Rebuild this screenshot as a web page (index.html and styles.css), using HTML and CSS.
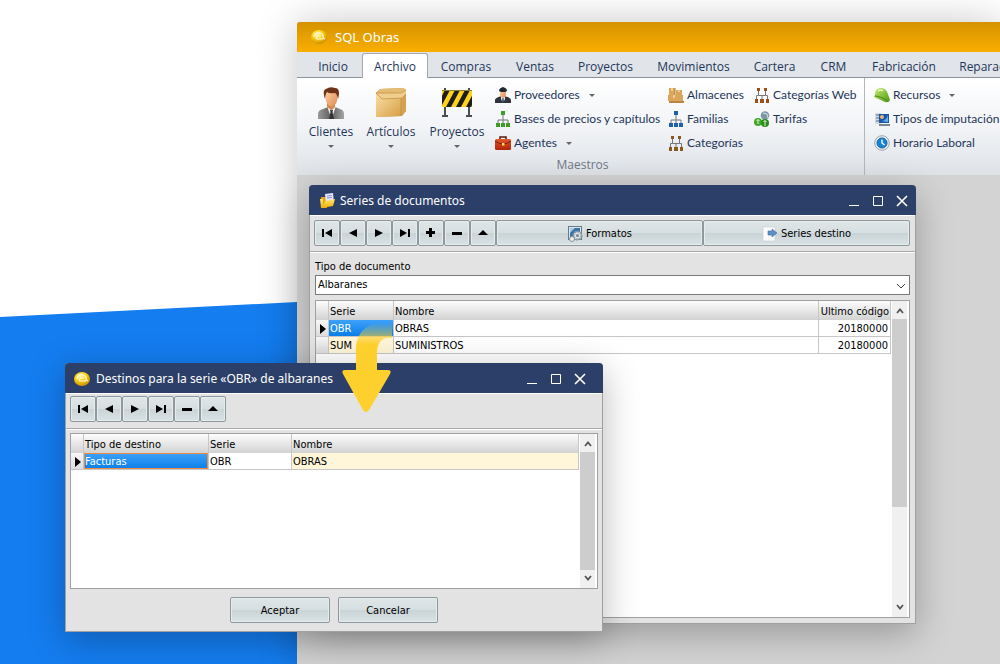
FILE: index.html
```html
<!DOCTYPE html>
<html lang="es">
<head>
<meta charset="utf-8">
<title>SQL Obras</title>
<link rel="stylesheet" href="styles.css">
</head>
<body>
<svg class="defs" aria-hidden="true">
  <defs>
    <radialGradient id="gold" cx=".4" cy=".3" r=".75"><stop offset="0" stop-color="#fff3a0"/><stop offset=".45" stop-color="#fcd116"/><stop offset="1" stop-color="#c98500"/></radialGradient>
    <linearGradient id="suit" x1="0" y1="0" x2="1" y2="0"><stop offset="0" stop-color="#9a9a9a"/><stop offset=".5" stop-color="#5e5e5e"/><stop offset="1" stop-color="#a5a5a5"/></linearGradient>
    <linearGradient id="face" x1="0" y1="0" x2="1" y2="1"><stop offset="0" stop-color="#ffd2a6"/><stop offset="1" stop-color="#e08a50"/></linearGradient>
    <linearGradient id="carton" x1="0" y1="0" x2="1" y2="1"><stop offset="0" stop-color="#f9dfa6"/><stop offset="1" stop-color="#d79f45"/></linearGradient>
    <linearGradient id="red" x1="0" y1="0" x2="0" y2="1"><stop offset="0" stop-color="#e4572c"/><stop offset="1" stop-color="#b02408"/></linearGradient>
    <linearGradient id="lime" x1="0" y1="0" x2="1" y2="1"><stop offset="0" stop-color="#c6ec6c"/><stop offset="1" stop-color="#4c9a14"/></linearGradient>
    <linearGradient id="folder" x1="0" y1="0" x2="0" y2="1"><stop offset="0" stop-color="#ffe676"/><stop offset="1" stop-color="#f0b000"/></linearGradient>
    <linearGradient id="fade" x1="0" y1="0" x2="0" y2="1"><stop offset=".03" stop-color="#fed02e" stop-opacity="0"/><stop offset=".27" stop-color="#fed02e"/><stop offset="1" stop-color="#fed02e"/></linearGradient>
    <clipPath id="boardclip"><rect x="1" y="3" width="30" height="17"/></clipPath>
  </defs>
  <symbol id="logo" viewBox="0 0 16 16"><ellipse cx="8" cy="8" rx="8" ry="7" fill="url(#gold)"/><path d="M3 8q1-5 6-4 4 1 3 5l2 1M10 7H7Q4 8 6 10h6" fill="none" stroke="#fffbe0" stroke-width="1.200"/></symbol>
  <symbol id="client" viewBox="0 0 32 32"><path d="M3 32v-5q0-4 5-5l5-2h7l5 2q4 1 4 5v5z" fill="url(#suit)"/><path d="M12 19l4.500 13L21 19z" fill="#f6f6f6"/><path d="M15 23h3l-.5 2 1.500 7h-5l1.500-7z" fill="#333"/><path d="M12 16v4l4.500 3.500L20 20v-4z" fill="#d88950"/><ellipse cx="16.500" cy="11" rx="6" ry="8" fill="url(#face)"/><path d="M10 12Q7 3 11 2q4-3 9-1 6 0 3 11-1-5-3-6-6 1-8-1-2 3-2 7z" fill="#6d3316"/></symbol>
  <symbol id="box" viewBox="0 0 32 32"><path d="M1 6l4-4 23-1 3 2v21l-4 5-26 1z" fill="#c69444"/><path d="M1 6h25v23l-25 1z" fill="url(#carton)"/><path d="M26 6l5-3v21l-5 5z" fill="#d5a350"/><path d="M1 6l4-4 23-1 3 2-5 3z" fill="#e5bd72"/><path d="M1 6h25l5-3v4l-4 4-20 1z" fill="#f0cf8e"/><path d="M1 6l6 6 20-1 4-4M1 6h25l5-3M26 12v17" fill="none" stroke="#bd8b3d" stroke-width=".7"/></symbol>
  <symbol id="barrier" viewBox="0 0 32 32"><path d="M3 1h2v28H3zM27 1h2v28h-2zM1 28h6v2H1zM25 28h6v2h-6z" fill="#4b4f52"/><rect x="1" y="3" width="30" height="17" fill="#ffd21c"/><g clip-path="url(#boardclip)"><path d="M-5 20L4 3h5L0 20zM5 20L14 3h5L10 20zM15 20L24 3h5L20 20zM25 20L34 3h5L30 20z" fill="#1d1d1d"/></g><path d="M1 3.500h30" stroke="#8c7d3a"/></symbol>
  <symbol id="supplier" viewBox="0 0 16 16"><path d="M0 16v-3q0-2 5-3.500h6q5 1.500 5 3.500v3z" fill="#30343a"/><path d="M6 9h4v3l-2 4-2-4z" fill="#eee"/><ellipse cx="8" cy="6.500" rx="3" ry="4.300" fill="url(#face)"/><path d="M4 4q0-3 4-4 4 1 4 4l-2 1H6z" fill="#22272e"/><path d="M7.500 11h1l.5 5H7z" fill="#2b3d60"/></symbol>
  <symbol id="tree" viewBox="0 0 16 16"><path d="M8 3v10M3 13V9h10v4" fill="none" stroke="#777" stroke-width="1"/><path d="M6 0h4v4H6zM1 12h4v4H1zM6 12h4v4H6zM11 12h4v4h-4z" fill="currentColor"/></symbol>
  <symbol id="tree2" viewBox="0 0 16 16"><path d="M4.500 3v5.500h-2V13M11.500 3v5.500h2V13M4.500 8.500h7M8 8.500V13" fill="none" stroke="#777"/><path d="M3 1h3v3H3zM10 1h3v3h-3zM1 12h3v4H1zM6 12h4v4H6zM12 12h3v4h-3z" fill="currentColor"/></symbol>
  <symbol id="case" viewBox="0 0 16 16"><path d="M5 4V2h6v2" fill="none" stroke="#5c1705" stroke-width="1.500"/><rect y="4" width="16" height="11" rx="1.500" fill="url(#red)"/><path d="M0 6q8 6 16 0" fill="none" stroke="#7e1a06"/><path d="M7 8h2.500v2.500H7z" fill="#ffe048"/></symbol>
  <symbol id="store" viewBox="0 0 16 16"><path d="M1 1h6v7H1zM8 3h6v6H8zM0 8h15v6H0z" fill="#dba65c"/><path d="M3 1h2v3H3zM10 3h2v2h-2zM5 8h2v3H5z" fill="#f2cf90"/><path d="M1 14h15v2H1z" fill="#b98545"/><path d="M7 1v7" stroke="#b57e38"/></symbol>
  <symbol id="rates" viewBox="0 0 16 16"><circle cx="11" cy="4.500" r="4.300" fill="#7f97a5"/><path d="M9 2l4 1 1 4" stroke="#d1e2e8" fill="none"/><circle cx="4" cy="11" r="4" fill="#43a52a"/><circle cx="11" cy="12" r="4" fill="#2c8a1f"/><path d="M4 8.500V13M2.500 10L4 8.500 5.500 10M11 9.500V15M9.500 11L11 9.500l1.500 1.500" stroke="#dbf7c9" fill="none"/></symbol>
  <symbol id="helmet" viewBox="0 0 16 16"><path d="M1 8Q1 1 7 1q5 0 7 6l2 6q-1 3-5 2L0 10q0-1 1-2z" fill="url(#lime)"/><path d="M1 9q5 0 13 5" fill="none" stroke="#4a8a16"/><path d="M4 4q3-2 5 0" stroke="#effbc6" stroke-width="1.500" fill="none"/></symbol>
  <symbol id="charge" viewBox="0 0 16 16"><path d="M1 2h6v11H1z" fill="#d4dbe0"/><path d="M2 4h3M2 7h3M2 10h3" stroke="#58697a"/><path d="M5 3h10v9H5z" fill="#1b55a8"/><path d="M7 10q5 0 7-6v7z" fill="#60aef4"/><circle cx="8" cy="6" r="2" fill="#e9b27e"/><path d="M5 13h11v2H5z" fill="#7b858e"/></symbol>
  <symbol id="clock" viewBox="0 0 16 16"><circle cx="8" cy="8" r="7.300" fill="#e8edf0" stroke="#9ba5ad"/><circle cx="8" cy="8" r="5" fill="#1683d8" stroke="#1761a2"/><path d="M8 4.500V8l2.500 2" fill="none" stroke="#fff" stroke-width="1.400"/></symbol>
  <symbol id="docs" viewBox="0 0 16 16"><path d="M1 4h5l1 2v9H1z" fill="#e2a70a"/><path d="M5 1l8-1 1 10-8 1z" fill="#e7e6ff"/><path d="M7 3l5-.5M7 5l5-.5" stroke="#8e8cd6"/><path d="M0 6h3v9H1zM2 15l3-7 10-2-2 7z" fill="url(#folder)"/></symbol>
  <symbol id="formats" viewBox="0 0 16 16"><rect x="1.500" y=".5" width="13" height="13" fill="#dfe7ed" stroke="#66798a"/><path d="M3 2h10v9H3z" fill="#3972a5"/><path d="M3 2h5l-5 5z" fill="#a6c9e3"/><circle cx="10.500" cy="9.500" r="4" fill="#dde2e5" stroke="#8b959c" stroke-width="2" stroke-dasharray="2 1"/><circle cx="10.500" cy="9.500" r="1.500" fill="#788791"/><circle cx="5" cy="13" r="2.500" fill="#edf0f2" stroke="#87939b"/></symbol>
  <symbol id="target" viewBox="0 0 16 16"><path d="M1 1h12v14H1z" fill="#fbfbfb" stroke="#c7ced2" stroke-width=".6"/><path d="M6 5h4V3l5 4-5 4V9H6z" fill="#5b8fc6" stroke="#466f9e" stroke-width=".6"/></symbol>
  <symbol id="first" viewBox="0 0 12 12"><path d="M1 2h2v8H1zM11 2v8L4 6z"/></symbol>
  <symbol id="prev" viewBox="0 0 12 12"><path d="M10 2v8L2 6z"/></symbol>
  <symbol id="next" viewBox="0 0 12 12"><path d="M2 2v8l8-4z"/></symbol>
  <symbol id="last" viewBox="0 0 12 12"><path d="M1 2v8l7-4zM9 2h2v8H9z"/></symbol>
  <symbol id="plus" viewBox="0 0 12 12"><path d="M4 1h3v3h3v3H7v3H4V7H1V4h3z"/></symbol>
  <symbol id="minus" viewBox="0 0 12 12"><path d="M1 5h10v3H1z"/></symbol>
  <symbol id="up" viewBox="0 0 12 12"><path d="M6 3l5 5H1z"/></symbol>
  <symbol id="min" viewBox="0 0 12 12"><path d="M1 10h10v1H1z"/></symbol>
  <symbol id="max" viewBox="0 0 12 12"><path d="M1.500 1.500h9v9h-9z" fill="none" stroke="currentColor"/></symbol>
  <symbol id="close" viewBox="0 0 12 12"><path d="M1 1l10 10M11 1L1 11" fill="none" stroke="currentColor" stroke-width="1.600"/></symbol>
  <symbol id="chevup" viewBox="0 0 12 12"><path d="M3 8l3-3.500L9 8" fill="none" stroke="#555" stroke-width="1.800"/></symbol>
  <symbol id="chevdown" viewBox="0 0 12 12"><path d="M3 4l3 3.500L9 4" fill="none" stroke="#555" stroke-width="1.800"/></symbol>
</svg>

<div class="backdrop"></div>

<main class="window app">
  <header class="app-title"><svg class="icon"><use href="#logo"/></svg><h1>SQL Obras</h1></header>
  <nav class="tabs">
    <button>Inicio</button><button class="active">Archivo</button><button>Compras</button><button>Ventas</button><button>Proyectos</button><button>Movimientos</button><button>Cartera</button><button>CRM</button><button>Fabricación</button><button>Reparaciones</button>
  </nav>
  <div class="ribbon">
    <section class="group masters">
      <div class="commands">
        <div class="large-commands">
          <button class="large"><svg><use href="#client"/></svg>Clientes<i class="caret"></i></button>
          <button class="large"><svg><use href="#box"/></svg>Artículos<i class="caret"></i></button>
          <button class="large"><svg><use href="#barrier"/></svg>Proyectos<i class="caret"></i></button>
        </div>
        <div class="column">
          <button class="small"><svg class="icon"><use href="#supplier"/></svg>Proveedores<i class="caret"></i></button>
          <button class="small"><svg class="icon green"><use href="#tree"/></svg>Bases de precios y capítulos</button>
          <button class="small"><svg class="icon"><use href="#case"/></svg>Agentes<i class="caret"></i></button>
        </div>
        <div class="column">
          <button class="small"><svg class="icon"><use href="#store"/></svg>Almacenes</button>
          <button class="small"><svg class="icon blue"><use href="#tree"/></svg>Familias</button>
          <button class="small"><svg class="icon brown"><use href="#tree2"/></svg>Categorías</button>
        </div>
        <div class="column">
          <button class="small"><svg class="icon rust"><use href="#tree2"/></svg>Categorías Web</button>
          <button class="small"><svg class="icon"><use href="#rates"/></svg>Tarifas</button>
        </div>
      </div>
      <h2>Maestros</h2>
    </section>
    <section class="group">
      <div class="column">
        <button class="small"><svg class="icon"><use href="#helmet"/></svg>Recursos<i class="caret"></i></button>
        <button class="small"><svg class="icon"><use href="#charge"/></svg>Tipos de imputación</button>
        <button class="small"><svg class="icon"><use href="#clock"/></svg>Horario Laboral</button>
      </div>
    </section>
  </div>
</main>

<section class="window dialog series">
  <header class="dialog-title"><svg class="icon"><use href="#docs"/></svg><h2>Series de documentos</h2>
    <button aria-label="Minimizar"><svg><use href="#min"/></svg></button><button aria-label="Maximizar"><svg><use href="#max"/></svg></button><button aria-label="Cerrar"><svg><use href="#close"/></svg></button>
  </header>
  <div class="toolbar">
    <button class="push nav" aria-label="Primero"><svg><use href="#first"/></svg></button><button class="push nav" aria-label="Anterior"><svg><use href="#prev"/></svg></button><button class="push nav" aria-label="Siguiente"><svg><use href="#next"/></svg></button><button class="push nav" aria-label="Último"><svg><use href="#last"/></svg></button><button class="push nav" aria-label="Añadir"><svg><use href="#plus"/></svg></button><button class="push nav" aria-label="Eliminar"><svg><use href="#minus"/></svg></button><button class="push nav" aria-label="Editar"><svg><use href="#up"/></svg></button>
    <button class="push wide"><svg class="icon"><use href="#formats"/></svg>Formatos</button>
    <button class="push wide"><svg class="icon"><use href="#target"/></svg>Series destino</button>
  </div>
  <div class="dialog-body">
    <label for="tipo">Tipo de documento</label>
    <div class="combo"><select id="tipo"><option>Albaranes</option></select><svg viewBox="0 0 12 12"><path d="M2 4l4 4 4-4"/></svg></div>
    <div class="grid">
      <table>
        <colgroup><col class="mark"><col class="serie"><col><col class="code"></colgroup>
        <thead><tr><th></th><th>Serie</th><th>Nombre</th><th class="num">Ultimo código</th></tr></thead>
        <tbody>
          <tr><td class="rowhead"><i class="pointer"></i></td><td class="selected">OBR</td><td>OBRAS</td><td class="num">20180000</td></tr>
          <tr><td class="rowhead"></td><td class="cream">SUM</td><td>SUMINISTROS</td><td class="num">20180000</td></tr>
        </tbody>
      </table>
      <div class="scrollbar"><svg><use href="#chevup"/></svg><div class="track"><div class="thumb"></div></div><svg><use href="#chevdown"/></svg></div>
    </div>
  </div>
</section>

<section class="window dialog targets">
  <header class="dialog-title"><svg class="icon"><use href="#logo"/></svg><h2>Destinos para la serie «OBR» de albaranes</h2>
    <button aria-label="Minimizar"><svg><use href="#min"/></svg></button><button aria-label="Maximizar"><svg><use href="#max"/></svg></button><button aria-label="Cerrar"><svg><use href="#close"/></svg></button>
  </header>
  <div class="toolbar">
    <button class="push nav" aria-label="Primero"><svg><use href="#first"/></svg></button><button class="push nav" aria-label="Anterior"><svg><use href="#prev"/></svg></button><button class="push nav" aria-label="Siguiente"><svg><use href="#next"/></svg></button><button class="push nav" aria-label="Último"><svg><use href="#last"/></svg></button><button class="push nav" aria-label="Eliminar"><svg><use href="#minus"/></svg></button><button class="push nav" aria-label="Editar"><svg><use href="#up"/></svg></button>
  </div>
  <div class="dialog-body">
    <div class="grid">
      <table>
        <colgroup><col class="mark"><col class="kind"><col class="dest-serie"><col></colgroup>
        <thead><tr><th></th><th>Tipo de destino</th><th>Serie</th><th>Nombre</th></tr></thead>
        <tbody><tr><td class="rowhead"><i class="pointer"></i></td><td class="selected focused">Facturas</td><td>OBR</td><td class="cream">OBRAS</td></tr></tbody>
      </table>
      <div class="scrollbar"><svg><use href="#chevup"/></svg><div class="track"><div class="thumb"></div></div><svg><use href="#chevdown"/></svg></div>
    </div>
  </div>
  <footer><button class="push">Aceptar</button><button class="push">Cancelar</button></footer>
</section>

<svg class="arrow" viewBox="0 0 54 94" aria-hidden="true"><path d="M14 50V29Q14 2 50 0V18Q35 16 35 34V50H46Q50 50 48 54L27 90Q24 94 21 90L1 54Q-1 50 3 50Z" fill="url(#fade)"/></svg>
</body>
</html>
```

FILE: styles.css
```css
* { box-sizing: border-box; }
body {
  margin: 0;
  min-height: 100vh;
  overflow: hidden;
  position: relative;
  background: #fff;
  color: #000;
  font: 11px/16px "DejaVu Sans Condensed", "Noto Sans", sans-serif;
}
h1, h2 { margin: 0; font-weight: 400; }
button { margin: 0; padding: 0; border: 0; background: none; color: inherit; font: inherit; }
svg { display: block; flex: none; }
.defs { position: absolute; width: 0; height: 0; }
.icon { width: 16px; height: 16px; }
.green { color: #3e9c26; }
.blue { color: #1f5fae; }
.brown { color: #8a5a1d; }
.rust { color: #a04d1c; }

.backdrop {
  position: absolute;
  inset: 285px 0 0;
  background: #147df0;
  clip-path: polygon(0 32px, 297px 17px, 100% 0, 100% 100%, 0 100%);
}
.window { position: absolute; display: flex; flex-direction: column; }

/* Main application window */
.app {
  top: 22px; left: 297px; right: 0; bottom: 0;
  background: #d3d3d3;
  border-radius: 3px 0 0 0;
  box-shadow: 0 0 40px rgba(0, 0, 0, .22);
  color: #1e3559;
  font: 12px/16px "Open Sans", "Noto Sans", sans-serif;
}
.app-title {
  display: flex; align-items: center; gap: 8px;
  height: 30px; padding: 0 14px;
  border-radius: 3px 0 0 0;
  background: linear-gradient(#d49300, #f9ae00);
  color: #fff;
}
.app-title h1 { font: 13px/20px "Noto Sans", "Open Sans", sans-serif; }
.tabs {
  display: grid;
  grid-template-columns: 58px 66px 76px 62px 79px 97px 65px 53px 88px 98px;
  height: 26px; padding-left: 7px;
  overflow: hidden;
  background: #e1e5e9;
  box-shadow: inset 0 -1px #8c9398;
}
.tabs button { padding-top: 3px; }
.tabs .active { margin-top: 1px; padding-top: 2px; background: #fff; border: 1px solid #a3a9ae; border-bottom: 0; border-radius: 3px 3px 0 0; }
.ribbon {
  display: flex;
  height: 97px;
  overflow: hidden;
  background: linear-gradient(#fff, #f2f4f7 50%, #dee2e7);
}
.group { flex: none; padding: 5px 9px 0; }
.group h2 { text-align: center; font-size: 12px; color: #707783; }
.masters { width: 568px; padding: 5px 0 0 4px; border-right: 1px solid #b3b7bb; }
.commands { display: grid; grid-template-columns: 194px 173px 86px 1fr; height: 74px; }
.large-commands { display: grid; grid-template-columns: 60px 60px 72px; padding-top: 4px; }
.large { display: flex; flex-direction: column; align-items: center; gap: 5px; white-space: nowrap; }
.large svg { width: 32px; height: 32px; }
.column { display: grid; grid-template-rows: repeat(3, 24px); justify-items: start; }
.small { display: flex; align-items: center; gap: 3px; white-space: nowrap; font-family: Lato, "Open Sans", sans-serif; }
.caret { width: 5px; border: 3px solid transparent; border-top-color: #666; border-bottom: 0; }
.small .caret { margin-left: 6px; }

/* Dialog windows */
.dialog {
  background: #e3e3e3;
  border: 1px solid #a0a0a0;
  border-top: 0;
  border-radius: 4px 4px 0 0;
}
.series { top: 185px; left: 309px; width: 607px; height: 439px; box-shadow: 0 10px 36px rgba(0, 0, 0, .28); }
.targets { top: 363px; left: 65px; width: 538px; height: 269px; box-shadow: 0 8px 36px rgba(0, 0, 0, .28); }
.dialog-title {
  display: flex; align-items: center; gap: 12px;
  height: 30px; margin: 0 -1px; padding: 2px 8px 0 11px;
  background: #2b3f68;
  border-radius: 4px 4px 0 0;
  color: #fff;
  font: 12px/18px "Noto Sans", "Open Sans", sans-serif;
}
.dialog-title h2 { flex: 1; margin-left: -8px; font-size: 12px; }
.dialog-title button svg { width: 12px; height: 12px; fill: currentColor; }
.targets .dialog-title { padding: 2px 17px 0 9px; }
.targets .dialog-title h2 { margin-left: -6px; }
.toolbar {
  display: flex;
  height: 37px; padding: 4px 5px 5px 4px;
  border-top: 1px solid #fff;
  border-bottom: 1px solid #a9a9a9;
  box-shadow: 0 1px #fff;
}
.targets .toolbar { height: 36px; padding-top: 2px; }
.push {
  display: flex; align-items: center; justify-content: center; gap: 3px;
  height: 26px;
  padding-top: 1px;
  background: linear-gradient(#dfe6e8, #d5dee0 50%, #cad4d7 51%, #d9e2e4);
  border: 1px solid #8d999d;
  border-radius: 2px;
  box-shadow: inset 0 0 0 1px #e6ecee;
}
.nav { width: 26px; padding-top: 0; }
.nav svg { width: 12px; height: 12px; }
.wide { flex: 1; }
.dialog-body { flex: 1; display: flex; flex-direction: column; min-height: 0; padding: 7px 5px 5px; }
.combo { position: relative; margin-bottom: 5px; }
.combo select {
  display: block; width: 100%; height: 20px; padding: 0 2px;
  appearance: none;
  border: 1px solid #7a7a7a; border-radius: 0;
  background: #fff; color: #000; font: inherit;
}
.combo svg { position: absolute; right: 3px; top: 5px; width: 12px; height: 12px; fill: none; stroke: #444; pointer-events: none; }
.grid { flex: 1; display: flex; align-items: flex-start; min-height: 0; padding-right: 2px; border: 1px solid #a0a0a0; background: #fff; }
table { flex: 1; table-layout: fixed; width: 0; border-collapse: separate; border-spacing: 0; }
.mark { width: 13px; }
.serie { width: 65px; }
.code { width: 72px; }
.kind { width: 125px; }
.dest-serie { width: 83px; }
th, td { padding: 1px 1px 0; border-right: 1px solid #c6c6c6; font-weight: 400; text-align: left; white-space: nowrap; line-height: 15px; }
th { height: 19px; padding-top: 2px; background: linear-gradient(#fdfdfd, #d2d2d2); }
td { height: 17px; border-bottom: 1px solid #c6c6c6; }
.num { text-align: right; }
td.num { padding-right: 2px; }
.rowhead { padding-left: 4px; background: linear-gradient(#f7f7f7, #dcdcdc); }
.pointer { display: block; width: 6px; border: 5px solid transparent; border-left: 6px solid #000; border-right: 0; }
.cream { background: #fff6d9; }
.selected { background: linear-gradient(#3da1fa, #0b7fe9); color: #fff; }
.focused { box-shadow: inset 0 0 0 1px #f08a3c; }
.scrollbar { align-self: stretch; display: flex; flex-direction: column; align-items: center; width: 15px; margin-left: 1px; padding: 4px 0; background: #f0f0f0; }
.scrollbar svg { width: 12px; height: 12px; }
.track { flex: 1; align-self: stretch; padding: 2px 0; }
.thumb { height: 67%; background: #cdcdcd; }
.targets .thumb { height: 100%; }
.targets .dialog-body { padding: 4px 4px 0; }
footer { display: flex; justify-content: center; gap: 8px; padding: 8px 0; }
footer .push { width: 100px; }

.arrow { position: absolute; left: 342px; top: 320px; width: 54px; height: 94px; }
```
